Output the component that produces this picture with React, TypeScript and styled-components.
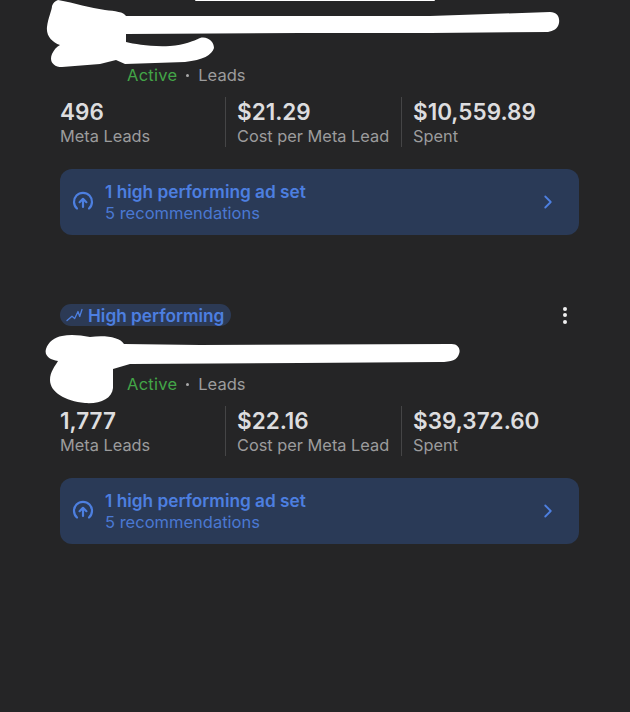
import React from "react";
import styled, { createGlobalStyle } from "styled-components";
import { ChevronRight } from "lucide-react";

const GlobalStyle = createGlobalStyle`
  html, body {
    margin: 0;
    padding: 0;
    background: #252526;
  }
  body {
    font-family: Inter, "Liberation Sans", sans-serif;
    -webkit-font-smoothing: antialiased;
  }
`;

const Page = styled.div`
  width: 630px;
  height: 712px;
  overflow: hidden;
  background: #252526;
  display: flex;
  flex-direction: column;
  gap: 69px;
`;

const Card = styled.section`
  position: relative;
  padding: 0 51px 0 60px;
`;

const TopRow = styled.div`
  display: flex;
  align-items: center;
  justify-content: space-between;
  height: 22px;
  padding-right: 12px;
`;

const Badge = styled.div`
  display: flex;
  align-items: center;
  gap: 5px;
  height: 22px;
  padding: 0 7px 0 6px;
  border-radius: 11px;
  background: #2c3a55;
  color: #4d7fe0;
  font-size: 17.25px;
  line-height: 21px;
  font-weight: 600;
`;

const Dots = styled.div`
  display: flex;
  flex-direction: column;
  gap: 2.5px;
`;

const Dot = styled.span`
  width: 4px;
  height: 4px;
  border-radius: 50%;
  background: #f0f0f0;
`;

const TitleSlot = styled.div<{ $height: number }>`
  height: ${(p) => p.$height}px;
`;

const Status = styled.div`
  display: flex;
  align-items: center;
  height: 22px;
  padding-left: 67px;
  font-size: 16.5px;
  gap: 8px;
`;

const Active = styled.span`
  color: #43a548;
  letter-spacing: 0.25px;
`;

const Sep = styled.span`
  width: 3px;
  height: 3px;
  margin: 0 1px;
  border-radius: 50%;
  background: #a9a9a9;
`;

const Kind = styled.span`
  color: #9c9c9d;
`;

const Stats = styled.div`
  display: grid;
  grid-template-columns: 165px 176px 1fr;
  margin-top: 11px;
`;

const Stat = styled.div`
  display: flex;
  flex-direction: column;
  height: 50px;
  padding-left: 11px;
  border-left: 1px solid #454546;
  &:first-child {
    padding-left: 0;
    border-left: none;
  }
`;

const StatValue = styled.div`
  font-size: 22.5px;
  line-height: 28px;
  padding-top: 1px;
  margin-bottom: -1px;
  font-weight: 600;
  color: #dddddf;
`;

const StatLabel = styled.div`
  font-size: 16.35px;
  line-height: 22px;
  color: #9c9c9d;
`;

const Banner = styled.div`
  display: flex;
  align-items: center;
  height: 66px;
  margin-top: 22px;
  padding: 0 20px 0 12px;
  border-radius: 12px;
  background: #2a3a57;
`;

const BannerText = styled.div`
  flex: 1;
  margin-left: 11px;
  margin-top: -1px;
  color: #4d7fe0;
`;

const BannerTitle = styled.div`
  font-size: 17.25px;
  line-height: 23px;
  font-weight: 600;
`;

const BannerSub = styled.div`
  font-size: 16.5px;
  line-height: 21px;
  color: #4a78d2;
`;

const Redaction = styled.svg`
  position: absolute;
  left: 0;
  top: 0;
  width: 630px;
  height: 110px;
  pointer-events: none;
`;

const UpCircle = () => (
  <svg width="22" height="22" viewBox="0 0 22 22" fill="none" stroke="#4d7fe0" strokeLinecap="round" strokeLinejoin="round">
    <path d="M5 17.5A9 9 0 1 1 17 17.5" strokeWidth="2.2" />
    <path d="M11 16V8M7.6 11.2 11 7.8l3.4 3.4" strokeWidth="2.2" />
  </svg>
);

const TrendIcon = () => (
  <svg width="17" height="14" viewBox="0 0 17 14" fill="none" stroke="#4d7fe0" strokeWidth="1.3" strokeLinecap="round" strokeLinejoin="round">
    <path d="M1 12.5 6 8.2l2.7 2.3L12 3.5l1.7 5L16 1.5" />
  </svg>
);

type Campaign = {
  value: string;
  cost: string;
  spent: string;
};

const Metrics = ({ value, cost, spent }: Campaign) => (
  <>
    <Status>
      <Active>Active</Active>
      <Sep />
      <Kind>Leads</Kind>
    </Status>
    <Stats>
      <Stat>
        <StatValue>{value}</StatValue>
        <StatLabel>Meta Leads</StatLabel>
      </Stat>
      <Stat>
        <StatValue>{cost}</StatValue>
        <StatLabel>Cost per Meta Lead</StatLabel>
      </Stat>
      <Stat>
        <StatValue>{spent}</StatValue>
        <StatLabel>Spent</StatLabel>
      </Stat>
    </Stats>
    <Banner>
      <UpCircle />
      <BannerText>
        <BannerTitle>1 high performing ad set</BannerTitle>
        <BannerSub>5 recommendations</BannerSub>
      </BannerText>
      <ChevronRight size={22} color="#4d7fe0" strokeWidth={2} />
    </Banner>
  </>
);

export default function App() {
  return (
    <Page>
      <GlobalStyle />
      <Card>
        <TitleSlot $height={64} />
        <Metrics value="496" cost="$21.29" spent="$10,559.89" />
        {/* scribbled-out campaign name */}
        <Redaction viewBox="0 0 630 110">
          <rect x="195" y="-4" width="240" height="5" rx="1" fill="#fff" />
          <path
            fill="#fff"
            d="M58 0 C75 3 90 8 105 10 C115 11 124 12 126 16 L300 16 L430 16 L550 12 C557 12 560 17 559 23 C558 29 553 31 548 32 L430 33 L300 33 L126 34 L126 42 C135 44 150 47 170 46 C185 45 193 41 200 38 C208 36 214 42 214 48 C212 55 203 60 185 62 L125 64 L116 60 L100 64 L62 67 C53 67 49 61 52 54 C54 50 56 47 60 45 C52 42 46 36 47 27 C48 18 52 10 52 6 C53 3 55 1 58 0 Z"
          />
        </Redaction>
      </Card>
      <Card>
        <TopRow>
          <Badge>
            <TrendIcon />
            High performing
          </Badge>
          <Dots>
            <Dot />
            <Dot />
            <Dot />
          </Dots>
        </TopRow>
        <TitleSlot $height={47} />
        <Metrics value="1,777" cost="$22.16" spent="$39,372.60" />
        <Redaction viewBox="0 0 630 110">
          <path
            fill="#fff"
            d="M62 32 C70 30 80 31 90 33 C105 31 120 33 124 40 L200 41 L450 40 C458 39 461 45 459 50 C457 56 452 58 440 58 L300 59 L130 60 L113 65 L113 84 C112 95 100 100 85 99 C65 97 50 88 50 76 C50 68 55 62 58 57 C50 56 44 52 46 45 C48 38 55 33 62 32 Z"
          />
        </Redaction>
      </Card>
    </Page>
  );
}
